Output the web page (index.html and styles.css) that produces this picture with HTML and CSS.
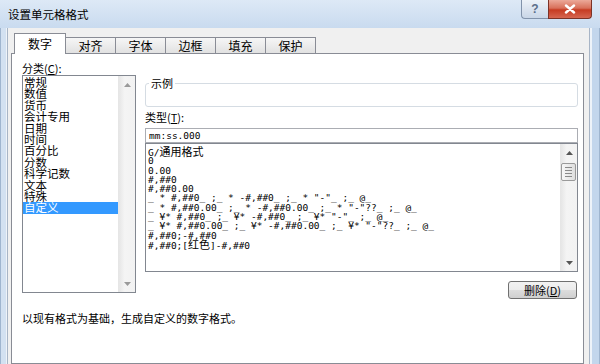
FILE: index.html
```html
<!DOCTYPE html>
<html lang="zh-CN">
<head>
  <meta charset="UTF-8">
  <title>设置单元格格式</title>
  <link rel="stylesheet" href="styles.css">
</head>
<body>

<div class="window">
  <div class="titlebar">
    <span class="title">设置单元格格式</span>
    <div class="caption">
      <div class="cap-btn help">?</div>
      <div class="cap-btn close">
        <svg width="12" height="10" viewBox="0 0 12 10"><path d="M2 1.5 L10 8.5 M10 1.5 L2 8.5" stroke="#fff" stroke-width="2.4" stroke-linecap="round"/></svg>
      </div>
    </div>
  </div>

  <div class="frame">
    <div class="edge-left"></div>
    <div class="client">
      <div class="tabs">
        <div class="tab active">数字</div>
        <div class="tab">对齐</div>
        <div class="tab">字体</div>
        <div class="tab">边框</div>
        <div class="tab">填充</div>
        <div class="tab">保护</div>
      </div>

      <div class="panel">
        <div class="cols">
          <div class="left-col">
            <div class="label">分类(<u>C</u>):</div>
            <div class="listbox cat-list">
              <div class="cat-items">
                <div>常规</div>
                <div>数值</div>
                <div>货币</div>
                <div>会计专用</div>
                <div>日期</div>
                <div>时间</div>
                <div>百分比</div>
                <div>分数</div>
                <div>科学记数</div>
                <div>文本</div>
                <div>特殊</div>
                <div class="sel">自定义</div>
              </div>
              <div class="vscroll">
                <div class="sb-btn"><svg width="7" height="4" viewBox="0 0 7 4"><path d="M0 4 L3.5 0 L7 4 Z" fill="#9a9a9a"/></svg></div>
                <div class="sb-track"></div>
                <div class="sb-btn"><svg width="7" height="4" viewBox="0 0 7 4"><path d="M0 0 L3.5 4 L7 0 Z" fill="#9a9a9a"/></svg></div>
              </div>
            </div>
          </div>

          <div class="right-col">
            <fieldset class="sample">
              <legend>示例</legend>
              <div class="sample-body"></div>
            </fieldset>
            <div class="label type-label">类型(<u>T</u>):</div>
            <div class="type-input">mm:ss.000</div>
            <div class="listbox fmt-list">
              <div class="fmt-items">
                <div>G/<span class="cjk">通用格式</span></div>
                <div>0</div>
                <div>0.00</div>
                <div>#,##0</div>
                <div>#,##0.00</div>
                <div>_ * #,##0_ ;_ * -#,##0_ ;_ * "-"_ ;_ @_</div>
                <div>_ * #,##0.00_ ;_ * -#,##0.00_ ;_ * "-"??_ ;_ @_</div>
                <div>_ ¥* #,##0_ ;_ ¥* -#,##0_ ;_ ¥* "-"_ ;_ @_</div>
                <div>_ ¥* #,##0.00_ ;_ ¥* -#,##0.00_ ;_ ¥* "-"??_ ;_ @_</div>
                <div>#,##0;-#,##0</div>
                <div>#,##0;[<span class="cjk">红色</span>]-#,##0</div>
              </div>
              <div class="vscroll">
                <div class="sb-btn"><svg width="7" height="4" viewBox="0 0 7 4"><path d="M0 4 L3.5 0 L7 4 Z" fill="#555"/></svg></div>
                <div class="sb-track">
                  <div class="thumb"><span></span><span></span><span></span><span></span></div>
                </div>
                <div class="sb-btn"><svg width="7" height="4" viewBox="0 0 7 4"><path d="M0 0 L3.5 4 L7 0 Z" fill="#555"/></svg></div>
              </div>
            </div>
            <div class="btn-row">
              <button class="btn">删除(<u>D</u>)</button>
            </div>
          </div>
        </div>

        <p class="desc">以现有格式为基础，生成自定义的数字格式。</p>
      </div>
    </div>
    <div class="edge-right"></div>
  </div>
</div>

</body>
</html>
```

FILE: styles.css
```css
* {
  box-sizing: border-box;
}

body {
  margin: 0;
  font-family: "Noto Sans CJK SC", "Noto Sans", sans-serif;
  color: #000;
  background: #fff;
}

.window {
  width: 600px;
  height: 364px;
  overflow: hidden;
  display: flex;
  flex-direction: column;
}

/* title bar */
.titlebar {
  height: 28px;
  flex: none;
  display: flex;
  align-items: flex-start;
  padding: 0 8px;
  background: linear-gradient(#dde9f6, #c9dbef);
}

.title {
  font-size: 11.5px;
  line-height: 14px;
  margin-top: 7px;
}

.caption {
  margin-left: auto;
  display: flex;
}

.cap-btn {
  height: 19px;
  display: flex;
  align-items: center;
  justify-content: center;
}

.help {
  width: 27px;
  border: 1px solid #8293ab;
  border-top: none;
  border-right: none;
  border-radius: 0 0 0 4px;
  background: linear-gradient(#edf2f8, #c9d6e7);
  color: #5d6f8a;
  font: bold 12px "Liberation Sans", sans-serif;
}

.close {
  width: 44px;
  border: 1px solid #7c3226;
  border-top: none;
  border-radius: 0 0 4px 0;
  background: linear-gradient(#eca999, #d8705a 45%, #c63b22 55%, #d66650);
}

/* window body */
.frame {
  flex: 1;
  display: flex;
  min-height: 0;
}

.edge-left {
  width: 8px;
  background: linear-gradient(to right, #9fb5cf 0 1px, #d3e1f1 1px 6px, #eef3f9 6px 7px, #a8b5c6 7px);
}

.edge-right {
  width: 11px;
  background: linear-gradient(to right, #a8b5c6 0 1px, #eef3f9 1px 3px, #c3d6ec 3px 10px, #9fb5cf 10px);
}

.client {
  flex: 1;
  background: #f0f0f0;
  padding: 5px 5px 0 3px;
  display: flex;
  flex-direction: column;
}

/* tabs */
.tabs {
  display: flex;
  align-items: flex-end;
  height: 21px;
  padding-left: 3px;
}

.tab {
  width: 51px;
  height: 17px;
  margin-left: -1px;
  border: 1px solid #898c95;
  border-bottom: none;
  background: linear-gradient(#f6f6f6, #e0e0e0);
  font-size: 12px;
  line-height: 15px;
  text-align: center;
}

.tab.active {
  width: 52px;
  height: 21px;
  margin-left: 0;
  background: #fff;
  line-height: 19px;
  position: relative;
  z-index: 1;
}

.panel {
  flex: 1;
  margin-top: -1px;
  background: #fff;
  border: 1px solid #898c95;
  padding: 8px 5px 0 10px;
}

.cols {
  display: grid;
  grid-template-columns: 114px 1fr;
  column-gap: 9px;
}

.label {
  font-size: 11px;
  line-height: 13px;
}

/* list boxes */
.listbox {
  border: 1px solid #828790;
  background: #fff;
  display: flex;
}

.cat-list {
  height: 218px;
}

.cat-items {
  flex: 1;
  padding-top: 1px;
}

.cat-items div {
  height: 11.4px;
  line-height: 11.4px;
  font-size: 11.5px;
  padding-left: 1px;
  white-space: nowrap;
}

.cat-items .sel {
  background: #3399ff;
  color: #fff;
}

.vscroll {
  width: 17px;
  display: flex;
  flex-direction: column;
  border-left: 1px solid #e6e6e6;
  background: linear-gradient(to right, #e6e6e6, #f4f4f4 35%, #f2f2f2);
}

.sb-btn {
  height: 17px;
  flex: none;
  display: flex;
  align-items: center;
  justify-content: center;
}

.sb-track {
  flex: 1;
}

.thumb {
  margin: 2px 1px 0 0;
  height: 18px;
  border: 1px solid #9a9a9a;
  border-radius: 2px;
  background: linear-gradient(to right, #f7f7f7, #dedede);
  display: flex;
  flex-direction: column;
  justify-content: center;
  align-items: center;
  gap: 2px;
}

.thumb span {
  width: 7px;
  height: 1px;
  background: #8a8a8a;
}

/* right column */
.sample {
  margin: 15px 0 0;
  padding: 0;
  border: 1px solid #d5dce3;
  border-radius: 3px;
  min-width: 0;
}

.sample legend {
  font-size: 11px;
  line-height: 12px;
  padding: 0 2px;
  margin-left: 3px;
}

.sample-body {
  height: 17px;
}

.type-label {
  margin-top: 4px;
}

.type-input {
  margin-top: 4px;
  height: 15px;
  border: 1px solid #abadb3;
  padding-left: 3px;
  font-family: "DejaVu Sans Mono", monospace;
  font-size: 9.5px;
  line-height: 13px;
}

.fmt-list {
  height: 129px;
}

.fmt-items {
  flex: 1;
  padding: 3px 0 0 2px;
  font-family: "DejaVu Sans Mono", "Noto Sans CJK SC", monospace;
  font-size: 9.5px;
  overflow: hidden;
}

.fmt-items div {
  height: 9.3px;
  line-height: 9.3px;
  white-space: pre;
}

.cjk {
  font-family: "Noto Sans CJK SC", sans-serif;
  font-size: 11px;
}

.btn-row {
  display: flex;
  justify-content: flex-end;
  margin-top: 9px;
  padding-right: 1px;
}

.btn {
  width: 69px;
  height: 18px;
  padding: 0;
  border: 1px solid #707070;
  border-radius: 3px;
  background: linear-gradient(#f2f2f2, #ebebeb 50%, #dddddd 50%, #cfcfcf);
  font-family: "Noto Sans CJK SC", sans-serif;
  font-size: 11px;
  line-height: 16px;
  color: #000;
}

.desc {
  margin: 13px 0 0;
  font-size: 11px;
  line-height: 13px;
}
```
